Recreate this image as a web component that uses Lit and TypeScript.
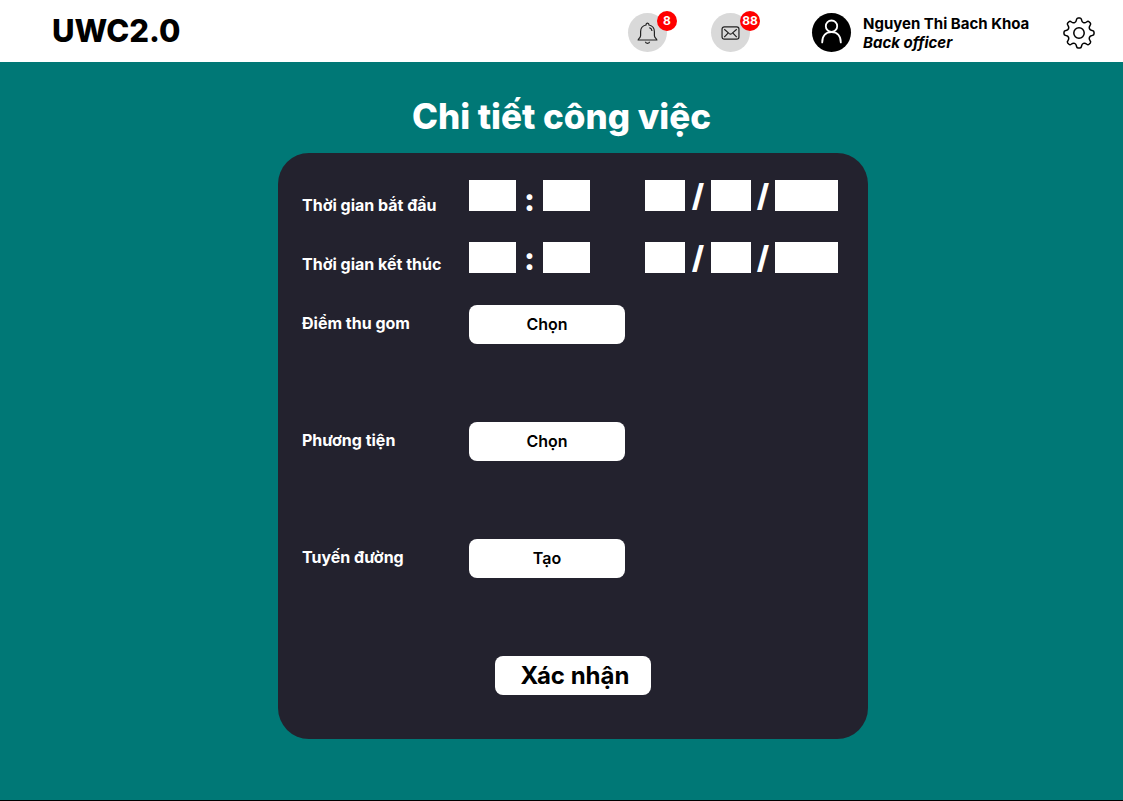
import { LitElement, html, css, svg } from "lit";
import { customElement, property } from "lit/decorators.js";

const bellIcon = svg`
  <path d="M1.2 18 C1.2 16.4 3.6 16 3.6 13.4 L3.6 9.8 C3.6 6 6 3.6 9 3 C9 0.4 12 0.4 12 3 C15 3.6 17.4 6 17.4 9.8 L17.4 13.4 C17.4 16 19.8 16.4 19.8 18 Z"/>
  <path d="M8.4 19.8 C8.6 21.8 12.4 21.8 12.6 19.8"/>
  <path d="M12.4 5.6 C14 6.2 14.9 7.4 15 9"/>`;

const mailIcon = svg`
  <rect x="0.8" y="0.8" width="16.9" height="12.4" rx="2.2"/>
  <path d="M3 3.2 L8 7.6 Q9.25 8.6 10.5 7.6 L15.5 3.2"/>
  <path d="M3 11.2 L6.8 7.2 M15.5 11.2 L11.7 7.2"/>`;

const personIcon = svg`
  <circle cx="19.5" cy="13.2" r="5.7"/>
  <path d="M10.2 29.4 C10.2 22.6 14 19 19.5 19 C25 19 28.8 22.6 28.8 29.4"/>`;

const gearIcon = svg`
  <circle cx="16" cy="16" r="5.2"/>
  <path d="M13.4 3 Q13.8 1 15 1 H17 Q18.2 1 18.6 3 C18.9 5.6 21.4 6.6 23.5 5 Q25 3.8 26 4.7 L27.3 6 Q28.2 7 27 8.5 C25.4 10.6 26.4 13.1 29 13.4 Q31 13.8 31 15 V17 Q31 18.2 29 18.6 C26.4 18.9 25.4 21.4 27 23.5 Q28.2 25 27.3 26 L26 27.3 Q25 28.2 23.5 27 C21.4 25.4 18.9 26.4 18.6 29 Q18.2 31 17 31 H15 Q13.8 31 13.4 29 C13.1 26.4 10.6 25.4 8.5 27 Q7 28.2 6 27.3 L4.7 26 Q3.8 25 5 23.5 C6.6 21.4 5.6 18.9 3 18.6 Q1 18.2 1 17 V15 Q1 13.8 3 13.4 C5.6 13.1 6.6 10.6 5 8.5 Q3.8 7 4.7 6 L6 4.7 Q7 3.8 8.5 5 C10.6 6.6 13.1 5.6 13.4 3 Z"/>`;

@customElement("app-header")
class AppHeader extends LitElement {
  static styles = css`
    :host {
      display: block;
      background: #fff;
      color: #000;
    }
    .bar {
      display: flex;
      align-items: center;
      height: 62px;
      padding: 3px 28px 0 52px;
      box-sizing: border-box;
    }
    .brand {
      margin-right: auto;
      font-size: 31px;
      line-height: 38px;
      font-weight: 800;
      padding-bottom: 3px;
    }
    button {
      border: 0;
      padding: 0;
      background: none;
      font: inherit;
      color: inherit;
      cursor: pointer;
    }
    svg {
      display: block;
      fill: none;
      stroke: currentColor;
    }
    .round {
      position: relative;
      display: grid;
      place-items: center;
      width: 39px;
      height: 39px;
      border-radius: 50%;
      background: #d9d9d9;
      color: #222;
      margin-right: 44px;
    }
    .round.mail {
      margin-right: 62px;
    }
    .badge {
      position: absolute;
      top: -2px;
      right: -10px;
      width: 20px;
      height: 20px;
      border-radius: 50%;
      background: #f00;
      color: #fff;
      font-size: 12px;
      line-height: 20px;
      font-weight: 700;
      text-align: center;
    }
    .avatar {
      width: 39px;
      height: 39px;
      border-radius: 50%;
      background: #000;
      color: #fff;
      margin-right: 12px;
    }
    .who {
      min-width: 172px;
      font-size: 15px;
      line-height: 19px;
      font-weight: 700;
      margin-right: 28px;
      white-space: nowrap;
    }
    .role {
      font-style: italic;
    }
  `;

  render() {
    return html`
      <header class="bar">
        <div class="brand">UWC2.0</div>
        <button class="round" aria-label="Thông báo">
          <svg width="21" height="22" viewBox="0 0 21 22" stroke-width="1.2">${bellIcon}</svg>
          <span class="badge">8</span>
        </button>
        <button class="round mail" aria-label="Tin nhắn">
          <svg width="19" height="14" viewBox="0 0 18.5 14" stroke-width="1.2">${mailIcon}</svg>
          <span class="badge">88</span>
        </button>
        <div class="avatar">
          <svg width="39" height="39" viewBox="0 0 39 39" stroke-width="1.8" stroke-linecap="round">${personIcon}</svg>
        </div>
        <div class="who">
          <div>Nguyen Thi Bach Khoa</div>
          <div class="role">Back officer</div>
        </div>
        <button aria-label="Cài đặt">
          <svg width="32" height="32" viewBox="0 0 32 32" stroke-width="1.5">${gearIcon}</svg>
        </button>
      </header>
    `;
  }
}

@customElement("date-time-row")
class DateTimeRow extends LitElement {
  @property() name = "";
  @property() label = "";

  static styles = css`
    :host {
      display: block;
    }
    .row {
      display: grid;
      grid-template-columns: 167px 47px 27px 47px 55px 40px 26px 40px 24px 63px;
      align-items: start;
      height: 31px;
    }
    label {
      font-size: 16px;
      line-height: 20px;
      font-weight: 700;
      padding-top: var(--drop);
    }
    input {
      width: 100%;
      height: 31px;
      box-sizing: border-box;
      border: 0;
      border-radius: 0;
      padding: 0 4px;
      background: #fff;
      font: inherit;
      font-size: 16px;
      color: #000;
      text-align: center;
    }
    .sep {
      font-size: 31px;
      line-height: 31px;
      font-weight: 800;
      text-align: center;
    }
    .colon {
      padding-top: calc(var(--drop) - 11px);
    }
    .day {
      grid-column: 6;
    }
  `;

  render() {
    return html`
      <div class="row">
        <label for="hour">${this.label}</label>
        <input id="hour" name="${this.name}-hour" aria-label="${this.label}: giờ" />
        <span class="sep colon">:</span>
        <input name="${this.name}-minute" aria-label="${this.label}: phút" />
        <input class="day" name="${this.name}-day" aria-label="${this.label}: ngày" />
        <span class="sep">/</span>
        <input name="${this.name}-month" aria-label="${this.label}: tháng" />
        <span class="sep">/</span>
        <input name="${this.name}-year" aria-label="${this.label}: năm" />
      </div>
    `;
  }
}

const pickers = [
  { id: "point", label: "Điểm thu gom", action: "Chọn" },
  { id: "vehicle", label: "Phương tiện", action: "Chọn" },
  { id: "route", label: "Tuyến đường", action: "Tạo" },
];

@customElement("app-root")
class AppRoot extends LitElement {
  static styles = css`
    :host {
      display: flex;
      flex-direction: column;
      min-height: 100vh;
      box-sizing: border-box;
      border-bottom: 1px solid #000;
      background: #007876;
      color: #fff;
      font-family: Inter, "Noto Sans", sans-serif;
    }
    main {
      display: flex;
      flex-direction: column;
      align-items: center;
      padding: 32px 0 60px;
    }
    h1 {
      margin: 0 0 15px;
      font-size: 35px;
      line-height: 44px;
      font-weight: 800;
    }
    .card {
      width: 590px;
      box-sizing: border-box;
      margin-left: 23px;
      padding: 27px 24px 44px;
      border-radius: 31px;
      background: #23222e;
    }
    .times {
      display: grid;
      gap: 31px;
      margin-bottom: 32px;
    }
    .start {
      --drop: 15px;
    }
    .end {
      --drop: 12px;
    }
    .pickers {
      display: grid;
      gap: 78px;
    }
    .picker {
      display: grid;
      grid-template-columns: 167px 156px;
      align-items: center;
    }
    label {
      font-size: 16px;
      line-height: 20px;
      font-weight: 700;
      padding-bottom: 3px;
    }
    button {
      width: 156px;
      height: 39px;
      border: 0;
      padding: 0 0 2px;
      border-radius: 8px;
      background: #fff;
      color: #000;
      font: inherit;
      font-size: 16px;
      font-weight: 600;
      cursor: pointer;
    }
    .confirm {
      display: block;
      margin: 78px auto 0;
      padding: 0 0 0 4px;
      font-size: 24px;
      font-weight: 700;
    }
  `;

  render() {
    return html`
      <app-header></app-header>
      <main>
        <h1>Chi tiết công việc</h1>
        <form class="card" @submit=${(e: Event) => e.preventDefault()}>
          <div class="times">
            <date-time-row class="start" name="start" label="Thời gian bắt đầu"></date-time-row>
            <date-time-row class="end" name="end" label="Thời gian kết thúc"></date-time-row>
          </div>
          <div class="pickers">
            ${pickers.map(
              (p) => html`
                <div class="picker">
                  <label for=${p.id}>${p.label}</label>
                  <button type="button" id=${p.id}>${p.action}</button>
                </div>
              `
            )}
          </div>
          <button class="confirm" type="submit">Xác nhận</button>
        </form>
      </main>
    `;
  }
}
